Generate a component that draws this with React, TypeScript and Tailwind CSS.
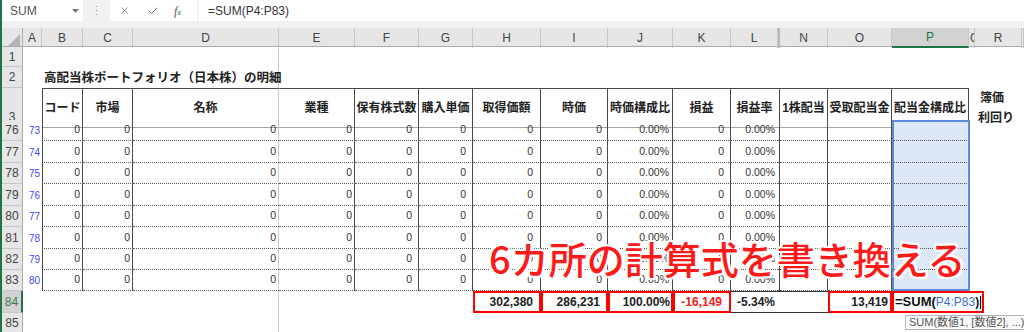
import { X, Check } from "lucide-react"

// column template: row header, A..R and the rest of the window
const GRID =
  "grid grid-cols-[21px_19px_41px_50px_146px_76px_64px_54px_68px_67px_65px_58px_47px_2px_48px_64px_77px_6px_47px_1fr]"

const SANS = "font-['Liberation_Sans','Noto_Sans_CJK_JP',sans-serif]"
const JP = "font-['Noto_Sans_CJK_JP',sans-serif]"

const DARK = "border-r border-r-[#4a4a4a]"
const LIGHT = "border-r border-r-[#c8c8c8]"
const DOT = "[border-bottom:1px_dotted_#5a5a5a]"
const NUM = "flex items-center justify-end text-[10.5px] text-[#333]"

const letters = ["A", "B", "C", "D", "E", "F", "G", "H", "I", "J", "K", "L", "M", "N", "O", "P", "Q", "R", ""]

const dataRows = [
  { n: 76, h: "h-[21px]" },
  { n: 77, h: "h-[22px]" },
  { n: 78, h: "h-[21px]" },
  { n: 79, h: "h-[22px]" },
  { n: 80, h: "h-[21px]" },
  { n: 81, h: "h-[22px]" },
  { n: 82, h: "h-[21px]" },
  { n: 83, h: "h-[21px]" },
]

function FormulaBar() {
  return (
    <div className="flex h-[28px] bg-[#f1f1f1] pb-[7px]">
      <div className="flex w-[81px] items-center justify-between bg-white pl-[8px] pr-[4px] text-[12px] text-[#555]">
        <span>SUM</span>
        <svg width="7" height="4" viewBox="0 0 7 4">
          <polygon points="0,0 7,0 3.5,4" fill="#777" />
        </svg>
      </div>
      <div className="flex w-[27px] flex-col items-center justify-center gap-[3px]">
        <span className="h-[1px] w-[1px] bg-[#999]" />
        <span className="h-[1px] w-[1px] bg-[#999]" />
        <span className="h-[1px] w-[1px] bg-[#999]" />
      </div>
      <div className="flex w-[87px] items-center bg-white text-[#666]">
        <X className="ml-[9px] h-[11px] w-[11px]" strokeWidth={1.6} />
        <Check className="ml-[17px] h-[12px] w-[12px]" strokeWidth={2} />
        <span className="ml-[15px] font-['Liberation_Serif',serif] text-[12px] italic text-[#555]">
          f<span className="text-[9px]">x</span>
        </span>
      </div>
      <div className="ml-[2px] flex flex-1 items-center bg-white pl-[9px] text-[12px] text-[#333]">=SUM(P4:P83)</div>
    </div>
  )
}

function ColHeader() {
  return (
    <div className={`${GRID} h-[19px] bg-[#e6e6e6] border-b border-b-[#ababab]`}>
      <div className="relative border-r border-r-[#ababab]">
        <svg className="absolute bottom-[2px] right-[2px]" width="12" height="12" viewBox="0 0 12 12">
          <polygon points="12,0 12,12 0,12" fill="#b4b4b4" />
        </svg>
      </div>
      {letters.map((l, i) => {
        if (l === "M") return <div key={i} className="border-x border-x-[#b8b8b8]" />
        if (l === "P")
          return (
            <div
              key={i}
              className="flex items-center justify-center border-r border-r-[#c6c6c6] border-b-2 border-b-[#217346] bg-[#d2d2d2] text-[12px] text-[#217346]"
            >
              P
            </div>
          )
        if (l === "Q")
          return (
            <div key={i} className="flex items-center overflow-hidden border-r border-r-[#c6c6c6] pl-[1px] text-[12px] text-[#444]">
              Q
            </div>
          )
        return (
          <div key={i} className="flex items-center justify-center border-r border-r-[#c6c6c6] text-[12px] text-[#444]">
            {l}
          </div>
        )
      })}
    </div>
  )
}

function RowHead({ n, bottom, selected }: { n: number; bottom?: boolean; selected?: boolean }) {
  return (
    <div
      className={`flex justify-center border-b border-b-[#c8c8c8] text-[12px] ${bottom ? "items-end pb-[1px]" : "items-center"} ${
        selected
          ? "border-r-2 border-r-[#217346] bg-[#d2d2d2] text-[#3d7a52]"
          : "border-r border-r-[#ababab] bg-[#e6e6e6] text-[#444]"
      }`}
    >
      {n}
    </div>
  )
}

function EmptyRow({ n, h, children }: { n: number; h: string; children?: React.ReactNode }) {
  return (
    <div className={`${GRID} ${h}`}>
      <RowHead n={n} />
      <div />
      <div className="relative">{children}</div>
      <div />
      <div className={LIGHT} />
    </div>
  )
}

function TableHeader() {
  const th = "flex items-center justify-center border-t border-t-[#4a4a4a] border-b border-b-[#a6a6a6] text-[12px] font-bold text-[#222] whitespace-nowrap"
  return (
    <div className={`${GRID} h-[32px]`}>
      <RowHead n={3} bottom />
      <div />
      <div className={`${th} ${DARK} border-l border-l-[#4a4a4a]`}>コード</div>
      <div className={`${th} ${DARK}`}>市場</div>
      <div className={`${th} ${LIGHT}`}>名称</div>
      <div className={`${th} ${DARK}`}>業種</div>
      <div className={`${th} ${DARK}`}>保有株式数</div>
      <div className={`${th} ${DARK}`}>購入単価</div>
      <div className={`${th} ${DARK}`}>取得価額</div>
      <div className={`${th} ${DARK}`}>時価</div>
      <div className={`${th} ${DARK}`}>時価構成比</div>
      <div className={`${th} ${DARK}`}>損益</div>
      <div className={th}>損益率</div>
      <div className={`${th} ${DARK}`} />
      <div className={`${th} ${DARK}`}>1株配当</div>
      <div className={`${th} ${DARK}`}>受取配当金</div>
      <div className={`${th} ${DARK}`}>配当金構成比</div>
      <div />
      <div className="flex flex-col items-start justify-center pl-[3px] text-[12px] font-bold leading-[20px] text-[#222] whitespace-nowrap">
        <span className="pl-[2px]">簿価</span>
        <span>利回り</span>
      </div>
    </div>
  )
}

function DataRow({ n, h }: { n: number; h: string }) {
  return (
    <div className={`${GRID} ${h}`}>
      <RowHead n={n} />
      <div className="flex items-center justify-end pr-[2px] text-[10px] text-[#4646ff]">{n - 3}</div>
      <div className={`${NUM} ${DARK} ${DOT} border-l border-l-[#4a4a4a] pr-[2px]`}>0</div>
      <div className={`${NUM} ${DARK} ${DOT} pr-[2px]`}>0</div>
      <div className={`${NUM} ${LIGHT} ${DOT} pr-[2px]`}>0</div>
      <div className={`${NUM} ${DARK} ${DOT} pr-[2px]`}>0</div>
      <div className={`${NUM} ${DARK} ${DOT} pr-[6px]`}>0</div>
      <div className={`${NUM} ${DARK} ${DOT} pr-[6px]`}>0</div>
      <div className={`${NUM} ${DARK} ${DOT} pr-[7px]`}>0</div>
      <div className={`${NUM} ${DARK} ${DOT} pr-[5px]`}>0</div>
      <div className={`${NUM} ${DARK} ${DOT} pr-[3px]`}>0.00%</div>
      <div className={`${NUM} ${DARK} ${DOT} pr-[6px]`}>0</div>
      <div className={`${NUM} ${DOT} pr-[3px]`}>0.00%</div>
      <div className={`${DARK} ${DOT}`} />
      <div className={`${DARK} ${DOT}`} />
      <div className={`${DARK} ${DOT}`} />
      <div className={`${DOT} bg-[#dde7f5]`} />
    </div>
  )
}

function TotalRow() {
  const red = "flex items-center justify-end border-2 border-[#ff0000] text-[12px] font-bold text-[#222]"
  const line = "border-y border-y-[#333]"
  return (
    <div className={`${GRID} h-[22px]`}>
      <RowHead n={84} selected />
      <div />
      <div />
      <div />
      <div className={LIGHT} />
      <div />
      <div />
      <div />
      <div className={`${red} pr-[6px]`}>302,380</div>
      <div className={`${red} pr-[6px]`}>286,231</div>
      <div className={`${red} pr-[1px]`}>100.00%</div>
      <div className={`${red} pr-[7px] text-[#f02020]`}>-16,149</div>
      <div className={`${line} flex items-center justify-end pr-[3px] text-[12px] font-bold text-[#222]`}>-5.34%</div>
      <div className={line} />
      <div className={line} />
      <div className={`${red} pr-[2px]`}>13,419</div>
      <div className="relative">
        <div className="absolute left-0 top-0 flex h-[22px] w-[92px] items-center whitespace-nowrap border-2 border-[#ff0000] bg-white pl-[1px]">
          <span className="text-[13px] font-bold text-[#111]">=SUM(</span>
          <span className="text-[12px] text-[#3a6fd0]">P4:P83</span>
          <span className="text-[12px] font-bold text-[#111]">)</span>
          <span className="ml-[1px] h-[13px] w-[1px] bg-black" />
        </div>
      </div>
    </div>
  )
}

export default function App() {
  return (
    <div className={`relative h-[332px] w-[1024px] overflow-hidden border-l-2 border-l-[#217346] bg-white ${SANS}`}>
      <FormulaBar />
      <ColHeader />
      <EmptyRow n={1} h="h-[20px]" />
      <EmptyRow n={2} h="h-[21px]">
        <div className={`absolute left-[2px] top-0 flex h-[21px] items-center whitespace-nowrap text-[12.5px] font-bold text-[#222] ${JP}`}>
          高配当株ポートフォリオ（日本株）の明細
        </div>
      </EmptyRow>
      <TableHeader />
      {dataRows.map((r) => (
        <DataRow key={r.n} n={r.n} h={r.h} />
      ))}
      <TotalRow />
      <EmptyRow n={85} h="h-[20px]" />

      {/* selection P76:P83 */}
      <div className="absolute left-[890px] top-[120px] h-[171px] w-[78px] border-2 border-[#5b8ad6]" />

      {/* annotation */}
      <div
        className={`absolute left-[487px] top-[239px] whitespace-nowrap text-[38px] font-medium leading-none text-[#ff1a1a] ${JP} [text-shadow:2px_0_0_#fff,-2px_0_0_#fff,0_2px_0_#fff,0_-2px_0_#fff,2px_2px_0_#fff,-2px_-2px_0_#fff,2px_-2px_0_#fff,-2px_2px_0_#fff]`}
      >
        6カ所の計算式を書き換える
      </div>

      {/* function tooltip */}
      <div className="absolute left-[903px] top-[315px] flex h-[15px] items-center whitespace-nowrap border border-[#b5b5b5] bg-[#fafafa] px-[3px] text-[11px] text-[#555]">
        SUM(数値1, [数値2], ...)
      </div>
    </div>
  )
}
